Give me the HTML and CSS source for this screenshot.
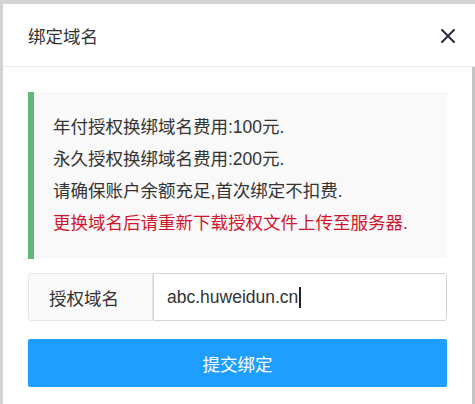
FILE: index.html
```html
<!DOCTYPE html>
<html lang="zh-CN">
<head>
<meta charset="utf-8">
<title>绑定域名</title>
<link rel="stylesheet" href="styles.css">
</head>
<body>
<div class="dialog">
  <div class="header">
    <span class="title">绑定域名</span>
    <span class="close">
      <svg width="14" height="14" viewBox="0 0 14 14"><path d="M1 1L13 13M13 1L1 13" stroke="#2b2b3b" stroke-width="2" stroke-linecap="round"/></svg>
    </span>
  </div>
  <div class="main">
    <div class="content">
      <div class="quote">
        <div class="line">年付授权换绑域名费用:100元.</div>
        <div class="line">永久授权换绑域名费用:200元.</div>
        <div class="line">请确保账户余额充足,首次绑定不扣费.</div>
        <div class="line red">更换域名后请重新下载授权文件上传至服务器.</div>
      </div>
      <div class="field">
        <div class="label">授权域名</div>
        <div class="input"><span class="value">abc.huweidun.cn</span><span class="caret"></span></div>
      </div>
      <div class="btn">提交绑定</div>
    </div>
    <div class="scroll"></div>
  </div>
</div>
</body>
</html>
```

FILE: styles.css
```css
html, body {
  margin: 0;
  padding: 0;
}
body {
  background: #d3d3d3;
  font-family: "Liberation Sans", "Noto Sans CJK SC", sans-serif;
  color: #333;
  overflow: hidden;
}
.dialog {
  margin: 4px 0 0 3px;
  width: 472px;
  height: 420px;
  background: #fff;
}
.header {
  height: 62px;
  border-bottom: 1px solid #eaeaea;
  display: flex;
  align-items: center;
  justify-content: space-between;
  padding: 0 20px 0 25px;
}
.title {
  font-size: 17.5px;
  color: #333;
  padding-top: 1px;
}
.close {
  display: flex;
  width: 14px;
  height: 14px;
  margin-top: 1px;
}
.main {
  display: flex;
  height: 357px;
}
.content {
  flex: 1;
  padding: 25px 25px 0 25px;
}
.scroll {
  width: 3px;
  background: #c4c4c4;
}
.quote {
  background: #f9f9f9;
  border-left: 6px solid #5fb878;
  padding: 19px 19px 20px 19px;
}
.line {
  font-size: 17.5px;
  line-height: 32px;
  color: #333;
}
.red {
  color: #d0162f;
}
.field {
  display: flex;
  margin-top: 14px;
  height: 48px;
  box-sizing: border-box;
}
.label {
  width: 103px;
  padding-left: 20px;
  background: #fafafa;
  border: 1px solid #e6e6e6;
  border-radius: 3px 0 0 3px;
  font-size: 17.5px;
  display: flex;
  align-items: center;
}
.input {
  flex: 1;
  border: 1px solid #d4d4d4;
  border-radius: 0 3px 3px 0;
  padding-left: 13px;
  display: flex;
  align-items: center;
  font-size: 17.5px;
  color: #333;
}
.caret {
  width: 2px;
  height: 21px;
  background: #222;
  margin-left: 1px;
}
.btn {
  margin-top: 18px;
  height: 48px;
  background: #1e9fff;
  border-radius: 2px;
  color: #fff;
  font-size: 17.5px;
  display: flex;
  align-items: center;
  justify-content: center;
}
```
